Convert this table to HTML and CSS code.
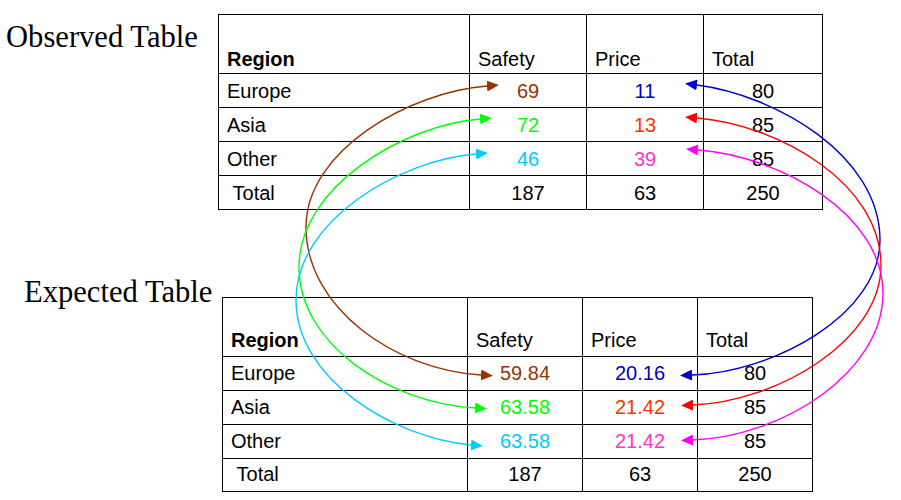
FILE: index.html
```html
<!DOCTYPE html>
<html lang="en">
<head>
<meta charset="utf-8">
<title>Observed and Expected Table</title>
<link rel="stylesheet" href="styles.css">
</head>
<body>
<main class="page">
  <section class="block block-observed">
    <h2 class="title title-observed">Observed Table</h2>
    <table class="ct ct-observed">
      <colgroup><col class="w-obs-region"><col class="w-obs-num"><col class="w-obs-num"><col class="w-obs-total"></colgroup>
      <tr class="row-head"><td class="lbl bold">Region</td><td class="lbl">Safety</td><td class="lbl">Price</td><td class="lbl">Total</td></tr>
      <tr class="row"><td class="lbl">Europe</td><td class="num c-brown">69</td><td class="num c-blue">11</td><td class="num">80</td></tr>
      <tr class="row"><td class="lbl">Asia</td><td class="num c-green">72</td><td class="num c-red">13</td><td class="num">85</td></tr>
      <tr class="row"><td class="lbl">Other</td><td class="num c-cyan">46</td><td class="num c-magenta">39</td><td class="num">85</td></tr>
      <tr class="row"><td class="lbl">&nbsp;Total</td><td class="num">187</td><td class="num">63</td><td class="num">250</td></tr>
    </table>
  </section>
  <section class="block block-expected">
    <h2 class="title title-expected">Expected Table</h2>
    <table class="ct ct-expected">
      <colgroup><col class="w-exp-region"><col class="w-exp-num"><col class="w-exp-num"><col class="w-exp-num"></colgroup>
      <tr class="row-head"><td class="lbl bold">Region</td><td class="lbl">Safety</td><td class="lbl">Price</td><td class="lbl">Total</td></tr>
      <tr class="row"><td class="lbl">Europe</td><td class="num c-brown">59.84</td><td class="num c-blue">20.16</td><td class="num">80</td></tr>
      <tr class="row"><td class="lbl">Asia</td><td class="num c-green">63.58</td><td class="num c-red">21.42</td><td class="num">85</td></tr>
      <tr class="row"><td class="lbl">Other</td><td class="num c-cyan">63.58</td><td class="num c-magenta">21.42</td><td class="num">85</td></tr>
      <tr class="row row-last"><td class="lbl">&nbsp;Total</td><td class="num">187</td><td class="num">63</td><td class="num">250</td></tr>
    </table>
  </section>
  <svg class="arrows" width="901" height="500" viewBox="0 0 901 500" aria-hidden="true">
    <defs>
      <marker id="m-brown" markerUnits="userSpaceOnUse" markerWidth="12" markerHeight="11" viewBox="0 0 12 11" refX="0" refY="5.5" orient="auto-start-reverse"><path d="M0,0 L12,5.5 L0,11 z" fill="#993300"/></marker>
      <marker id="m-green" markerUnits="userSpaceOnUse" markerWidth="12" markerHeight="11" viewBox="0 0 12 11" refX="0" refY="5.5" orient="auto-start-reverse"><path d="M0,0 L12,5.5 L0,11 z" fill="#00ff00"/></marker>
      <marker id="m-cyan" markerUnits="userSpaceOnUse" markerWidth="12" markerHeight="11" viewBox="0 0 12 11" refX="0" refY="5.5" orient="auto-start-reverse"><path d="M0,0 L12,5.5 L0,11 z" fill="#00ccff"/></marker>
      <marker id="m-blue" markerUnits="userSpaceOnUse" markerWidth="12" markerHeight="11" viewBox="0 0 12 11" refX="0" refY="5.5" orient="auto-start-reverse"><path d="M0,0 L12,5.5 L0,11 z" fill="#0000cc"/></marker>
      <marker id="m-red" markerUnits="userSpaceOnUse" markerWidth="12" markerHeight="11" viewBox="0 0 12 11" refX="0" refY="5.5" orient="auto-start-reverse"><path d="M0,0 L12,5.5 L0,11 z" fill="#ff0000"/></marker>
      <marker id="m-magenta" markerUnits="userSpaceOnUse" markerWidth="12" markerHeight="11" viewBox="0 0 12 11" refX="0" refY="5.5" orient="auto-start-reverse"><path d="M0,0 L12,5.5 L0,11 z" fill="#ff00ff"/></marker>
    </defs>
    <path class="arc" stroke="#993300" marker-start="url(#m-brown)" marker-end="url(#m-brown)"
      d="M487,86 C410,92 306,150 306,227 C306,308 395,370 481,375"/>
    <path class="arc" stroke="#00ff00" marker-start="url(#m-green)" marker-end="url(#m-green)"
      d="M480,119 C405,125 299,186 299,267 C299,345 390,403 475,408"/>
    <path class="arc" stroke="#00ccff" marker-start="url(#m-cyan)" marker-end="url(#m-cyan)"
      d="M476,154 C400,160 296,220 296,300 C296,380 395,438 471,445"/>
    <path class="arc" stroke="#0000cc" marker-start="url(#m-blue)" marker-end="url(#m-blue)"
      d="M697,85 C775,95 880,155 880,240 C880,314 775,372 692,375"/>
    <path class="arc" stroke="#ff0000" marker-start="url(#m-red)" marker-end="url(#m-red)"
      d="M697,118 C780,125 881,184 881,265 C881,342 775,402 693,405"/>
    <path class="arc" stroke="#ff00ff" marker-start="url(#m-magenta)" marker-end="url(#m-magenta)"
      d="M698,150 C780,156 883,214 883,293 C883,374 780,437 693,440"/>
  </svg>
</main>
</body>
</html>
```

FILE: styles.css
```css
html, body {
  margin: 0;
  padding: 0;
  background: #ffffff;
}

.page {
  position: relative;
  width: 901px;
  height: 500px;
  overflow: hidden;
  padding-top: 14px;
  box-sizing: border-box;
}

.block {
  display: flex;
  align-items: flex-start;
}

.block-expected {
  margin-top: 67px;
}

.title {
  font-family: "Liberation Serif", "Times New Roman", serif;
  font-weight: normal;
  font-size: 30.6px;
  line-height: 30px;
  color: #000;
  box-sizing: border-box;
  white-space: nowrap;
}

.title-observed {
  width: 218px;
  padding-left: 6px;
  margin: 8px 0 0 0;
}

.title-expected {
  width: 222px;
  padding-left: 24px;
  margin: 0;
}

.ct {
  border-collapse: collapse;
  table-layout: fixed;
  font-family: "Liberation Sans", Arial, sans-serif;
  font-size: 20px;
  line-height: 23px;
  color: #000;
}

.ct-observed {
  width: 605px;
}

.ct-expected {
  width: 591px;
  margin-top: 20px;
}

.w-obs-region { width: 251px; }
.w-obs-num { width: 117px; }
.w-obs-total { width: 119px; }
.w-exp-region { width: 245px; }
.w-exp-num { width: 115px; }

.ct td {
  border: 1px solid #000;
  padding: 0 8px 4px 8px;
  vertical-align: bottom;
  white-space: nowrap;
}

.ct .row-head td {
  height: 59px;
  box-sizing: border-box;
}

.ct .row td {
  height: 34px;
  box-sizing: border-box;
}

.ct .row-last td {
  height: 33px;
}

.ct-observed .row-head td { padding-bottom: 2px; }
.ct-observed .row td { padding-bottom: 4px; }
.ct-expected .row-head td { padding-bottom: 4px; }
.ct-expected .row td { padding-bottom: 5px; }

.lbl { text-align: left; }
.num { text-align: center; }
.bold { font-weight: bold; }

.c-brown { color: #993300; }
.c-green { color: #00ff00; }
.c-cyan { color: #00ccff; }
.c-blue { color: #0000cc; }
.c-red { color: #ff3300; }
.c-magenta { color: #ff33cc; }

.arrows {
  position: absolute;
  left: 0;
  top: 0;
  pointer-events: none;
}

.arc {
  fill: none;
  stroke-width: 1.4;
}
```
